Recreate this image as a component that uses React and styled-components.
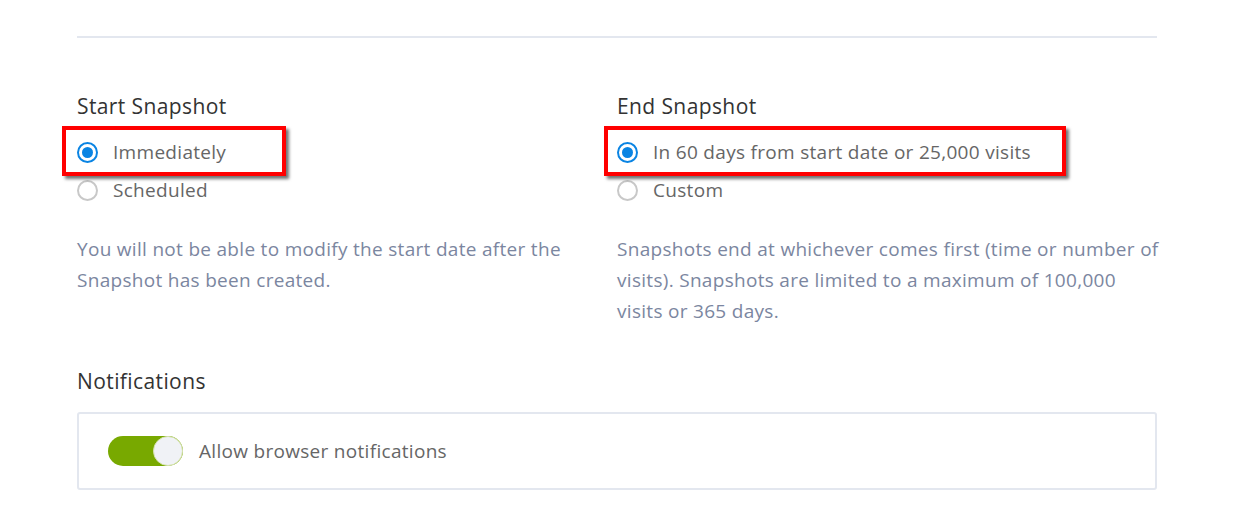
import styled, { createGlobalStyle } from 'styled-components'
import { useState } from 'react'

const GlobalStyle = createGlobalStyle`
  body {
    margin: 0;
    background: #fff;
    font-family: 'Open Sans', 'Lato', sans-serif;
  }
`

const S = {}

S.Page = styled.div`
  width: 1080px;
  padding: 36px 0 0 77px;
`

S.Divider = styled.hr`
  margin: 0;
  border: none;
  height: 2px;
  background: #e3e7ef;
`

S.Columns = styled.div`
  display: grid;
  grid-template-columns: 540px 540px;
  margin-top: 56px;
`

S.Column = styled.section`
  position: relative;
`

S.Heading = styled.h3`
  margin: 0;
  font-size: 21px;
  line-height: 24px;
  letter-spacing: 0.4px;
  font-weight: 400;
  color: #333;
`

S.Options = styled.div`
  margin-top: 15px;
  display: flex;
  flex-direction: column;
`

S.Option = styled.label`
  display: flex;
  align-items: center;
  gap: 15px;
  height: 38px;
  font-size: 19px;
  letter-spacing: 0.3px;
  color: #666;
  cursor: pointer;
`

S.Radio = styled.span`
  box-sizing: border-box;
  width: 21px;
  height: 21px;
  border-radius: 50%;
  border: 2px solid ${p => p.checked ? '#0a84e3' : '#c8c8c8'};
  display: flex;
  align-items: center;
  justify-content: center;

  &::after {
    content: '';
    width: 11px;
    height: 11px;
    border-radius: 50%;
    background: #0a84e3;
    display: ${p => p.checked ? 'block' : 'none'};
  }
`

S.Note = styled.p`
  margin: 25px -8px 0 0;
  font-size: 19px;
  line-height: 31px;
  letter-spacing: 0.3px;
  color: #7b86a0;
`

S.Highlight = styled.div`
  position: absolute;
  top: 32px;
  left: ${p => p.left}px;
  width: ${p => p.width}px;
  height: 50px;
  box-sizing: border-box;
  border: 4px solid #ff0000;
  box-shadow: 3px 3px 3px rgba(0, 0, 0, 0.55);
  pointer-events: none;
`

S.Notifications = styled.section`
  margin-top: 42px;
`

S.Panel = styled.div`
  margin-top: 19px;
  height: 78px;
  box-sizing: border-box;
  border: 2px solid #e3e7ef;
  border-radius: 3px;
  display: flex;
  align-items: center;
  gap: 16px;
  padding-left: 29px;
  font-size: 19px;
  letter-spacing: 0.3px;
  color: #666;
`

S.Toggle = styled.button`
  width: 75px;
  height: 30px;
  padding: 0;
  border: none;
  border-radius: 15px;
  background: ${p => p.on ? '#78a900' : '#c8ccd4'};
  display: flex;
  justify-content: ${p => p.on ? 'flex-end' : 'flex-start'};
  cursor: pointer;

  &::after {
    content: '';
    box-sizing: border-box;
    width: 30px;
    height: 30px;
    border-radius: 50%;
    background: #f0f2f6;
    border: 1px solid #d6e2b0;
  }
`

const RadioGroup = ({ options, value, onChange }) => (
  <S.Options>
    {options.map(o => (
      <S.Option key={o} onClick={() => onChange(o)}>
        <S.Radio checked={value === o} />
        {o}
      </S.Option>
    ))}
  </S.Options>
)

const App = () => {
  const [start, setStart] = useState('Immediately')
  const [end, setEnd] = useState('In 60 days from start date or 25,000 visits')
  const [notify, setNotify] = useState(true)

  return (
    <S.Page>
      <GlobalStyle />
      <S.Divider />
      <S.Columns>
        <S.Column>
          <S.Heading>Start Snapshot</S.Heading>
          <RadioGroup options={['Immediately', 'Scheduled']} value={start} onChange={setStart} />
          <S.Note>You will not be able to modify the start date after the Snapshot has been created.</S.Note>
          <S.Highlight left={-15} width={224} />
        </S.Column>
        <S.Column>
          <S.Heading>End Snapshot</S.Heading>
          <RadioGroup
            options={['In 60 days from start date or 25,000 visits', 'Custom']}
            value={end}
            onChange={setEnd}
          />
          <S.Note>Snapshots end at whichever comes first (time or number of visits). Snapshots are limited to a maximum of 100,000 visits or 365 days.</S.Note>
          <S.Highlight left={-13} width={462} />
        </S.Column>
      </S.Columns>
      <S.Notifications>
        <S.Heading>Notifications</S.Heading>
        <S.Panel>
          <S.Toggle on={notify} onClick={() => setNotify(!notify)} />
          Allow browser notifications
        </S.Panel>
      </S.Notifications>
    </S.Page>
  )
}

export default App
